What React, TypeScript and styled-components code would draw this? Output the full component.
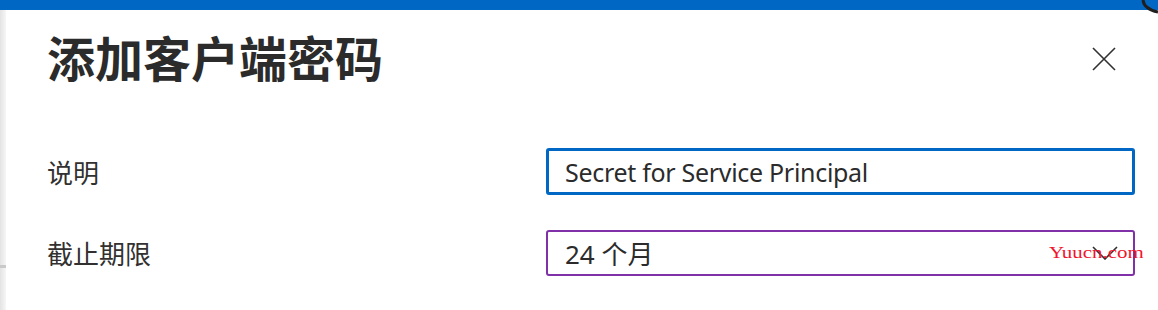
import styled, { createGlobalStyle } from 'styled-components';

const GlobalStyle = createGlobalStyle`
  html, body {
    margin: 0;
    padding: 0;
    background: #ffffff;
  }
  body {
    font-family: "Noto Sans", "Noto Sans CJK SC", sans-serif;
    color: #323130;
  }
`;

const Page = styled.div`
  position: relative;
  width: 1158px;
  height: 310px;
  display: flex;
  flex-direction: column;
  overflow: hidden;
`;

const TopBar = styled.div`
  height: 10px;
  flex: none;
  background: #0067c5;
`;

const Body = styled.div`
  flex: 1;
  display: flex;
`;

/* the page behind the blade, seen through its shadow */
const Gutter = styled.div`
  width: 6px;
  flex: none;
  background:
    linear-gradient(to bottom, transparent 255px, #c9c9c9 255px, #c9c9c9 258px, transparent 258px),
    linear-gradient(to right, #e3e3e3, #f6f6f6);
`;

const Panel = styled.section`
  flex: 1;
  background: #ffffff;
  padding: 18px 23px 0 41px;
`;

const Header = styled.header`
  display: flex;
  align-items: center;
  justify-content: space-between;
  height: 56px;
`;

const Title = styled.h1`
  margin: 0;
  font-family: "Noto Sans CJK SC", sans-serif;
  font-size: 48px;
  line-height: 56px;
  font-weight: 700;
  color: #2b2b2b;
`;

const CloseButton = styled.button`
  display: flex;
  align-items: center;
  justify-content: center;
  width: 24px;
  height: 24px;
  margin: 6px 19px 0 0;
  padding: 0;
  border: none;
  background: transparent;
  color: #323130;
  cursor: pointer;
`;

const Form = styled.div`
  display: grid;
  grid-template-columns: 499px 1fr;
  row-gap: 35px;
  align-items: center;
  margin-top: 64px;
`;

const Label = styled.label`
  font-family: "Noto Sans CJK SC", sans-serif;
  font-size: 26px;
  line-height: 32px;
  color: #323130;
`;

const TextInput = styled.input`
  box-sizing: border-box;
  width: 100%;
  height: 47px;
  padding: 0 0 0 16px;
  border: 3px solid #0067c5;
  border-radius: 3px;
  outline: none;
  font-family: "Noto Sans", "Noto Sans CJK SC", sans-serif;
  font-size: 25px;
  letter-spacing: -0.3px;
  color: #2b2b2b;
  background: #ffffff;
`;

const SelectBox = styled.div`
  position: relative;
  box-sizing: border-box;
  height: 46px;
  display: flex;
  align-items: center;
  justify-content: space-between;
  padding: 0 15px 0 17px;
  border: 2px solid #8031a7;
  border-radius: 3px;
  font-family: "Noto Sans", "Noto Sans CJK SC", sans-serif;
  font-size: 26px;
  color: #2b2b2b;
`;

const Watermark = styled.span`
  position: absolute;
  left: 501px;
  top: 12px;
  font-family: "Liberation Serif", serif;
  font-size: 17px;
  line-height: 17px;
  color: #f0142d;
  transform: scaleX(1.23);
  transform-origin: left center;
  white-space: nowrap;
`;

const CursorMark = styled.svg`
  position: absolute;
  top: 0;
  right: 0;
`;

export default function App() {
  return (
    <Page>
      <GlobalStyle />
      <TopBar />
      <Body>
        <Gutter />
        <Panel>
          <Header>
            <Title>添加客户端密码</Title>
            <CloseButton type="button" aria-label="关闭">
              <svg width="24" height="24" viewBox="0 0 24 24">
                <path d="M1 1 L23 23 M23 1 L1 23" stroke="currentColor" strokeWidth="1.6" fill="none" />
              </svg>
            </CloseButton>
          </Header>
          <Form>
            <Label htmlFor="desc">说明</Label>
            <TextInput id="desc" defaultValue="Secret for Service Principal" />
            <Label>截止期限</Label>
            <SelectBox>
              <span>24 个月</span>
              <svg width="26" height="14" viewBox="0 0 26 14">
                <path d="M1 1 L13 13 L25 1" stroke="#323130" strokeWidth="1.6" fill="none" />
              </svg>
              <Watermark>Yuucn.com</Watermark>
            </SelectBox>
          </Form>
        </Panel>
      </Body>
      <CursorMark width="18" height="14" viewBox="0 0 18 14">
        <path d="M3 0 Q4 9 18 12" stroke="#1f1f1f" strokeWidth="3" fill="none" />
      </CursorMark>
    </Page>
  );
}
